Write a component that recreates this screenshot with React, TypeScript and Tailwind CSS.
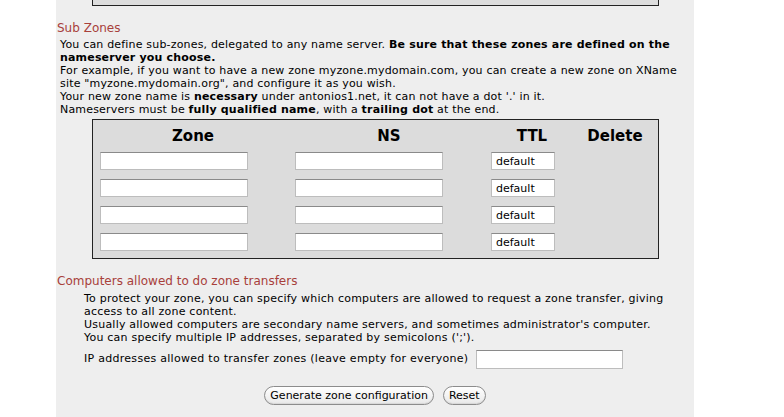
const font = { fontFamily: '"DejaVu Sans", Verdana, sans-serif' };

function TextBox({ className = '', value = '' }: { className?: string; value?: string }) {
  return (
    <input
      type="text"
      defaultValue={value}
      className={`h-[18px] border border-[#bdbdbd] border-t-[#8a8a8a] bg-white px-[4px] text-[11px] leading-none text-black outline-none ${className}`}
    />
  );
}

function PillButton({ children }: { children: string }) {
  return (
    <button
      type="button"
      className="h-[19px] rounded-full border border-[#8c8c8c] bg-gradient-to-b from-white to-[#e9e9e9] px-[5px] text-[11px] leading-none text-black shadow-[inset_0_-1px_1px_rgba(0,0,0,0.08)]"
    >
      {children}
    </button>
  );
}

const rows = [0, 1, 2, 3];

export default function App() {
  return (
    <div className="min-h-[417px] w-[784px] bg-white" style={font}>
      <div className="ml-[56px] min-h-[417px] w-[638px] bg-[#eeeeee]">
        <div className="ml-[36px] h-[6px] w-[567px] border-x border-b border-[#222] bg-[#dddddd]" />

        <h2 className="mt-[15px] pl-[1px] text-[12px] leading-[15px] font-normal text-[#a8403b]">Sub Zones</h2>
        <p className="mt-[2px] whitespace-nowrap pl-[4px] text-[11px] leading-[13px] tracking-[0.18px] text-black">
          You can define sub-zones, delegated to any name server.{' '}
          <b>Be sure that these zones are defined on the</b>
          <br />
          <b>nameserver you choose.</b>
          <br />
          For example, if you want to have a new zone myzone.mydomain.com, you can create a new zone on XName
          <br />
          site "myzone.mydomain.org", and configure it as you wish.
          <br />
          Your new zone name is <b>necessary</b> under antonios1.net, it can not have a dot '.' in it.
          <br />
          Nameservers must be <b>fully qualified name</b>, with a <b>trailing dot</b> at the end.
        </p>

        <div className="mt-[3px] ml-[36px] w-[567px] border border-[#222] bg-[#dcdcdc] pt-[9px] pb-[7px] pl-[7px]">
          <div className="grid grid-cols-[195px_196px_82px_84px] gap-y-[9px]">
            <div className="w-[186px] text-center text-[15px] leading-[14px] font-bold">Zone</div>
            <div className="w-[188px] text-center text-[15px] leading-[14px] font-bold">NS</div>
            <div className="text-center text-[15px] leading-[14px] font-bold">TTL</div>
            <div className="text-center text-[15px] leading-[14px] font-bold">Delete</div>
            {rows.map((i) => (
              <div key={i} className="contents">
                <TextBox className="w-[148px]" />
                <TextBox className="w-[148px]" />
                <TextBox className="w-[64px]" value="default" />
                <div />
              </div>
            ))}
          </div>
        </div>

        <h2 className="mt-[15px] pl-[1px] text-[12px] leading-[15px] font-normal text-[#a8403b]">
          Computers allowed to do zone transfers
        </h2>
        <p className="mt-[3px] whitespace-nowrap pl-[28px] text-[11px] leading-[13px] tracking-[0.22px] text-black">
          To protect your zone, you can specify which computers are allowed to request a zone transfer, giving
          <br />
          access to all zone content.
          <br />
          Usually allowed computers are secondary name servers, and sometimes administrator's computer.
          <br />
          You can specify multiple IP addresses, separated by semicolons (';').
        </p>
        <div className="mt-[6px] flex items-center gap-[8px] pl-[28px] text-[11px] tracking-[0.28px] text-black">
          <span>IP addresses allowed to transfer zones (leave empty for everyone)</span>
          <TextBox className="h-[19px] w-[147px]" />
        </div>

        <div className="mt-[17px] flex justify-center gap-[9px]">
          <PillButton>Generate zone configuration</PillButton>
          <PillButton>Reset</PillButton>
        </div>
      </div>
    </div>
  );
}
